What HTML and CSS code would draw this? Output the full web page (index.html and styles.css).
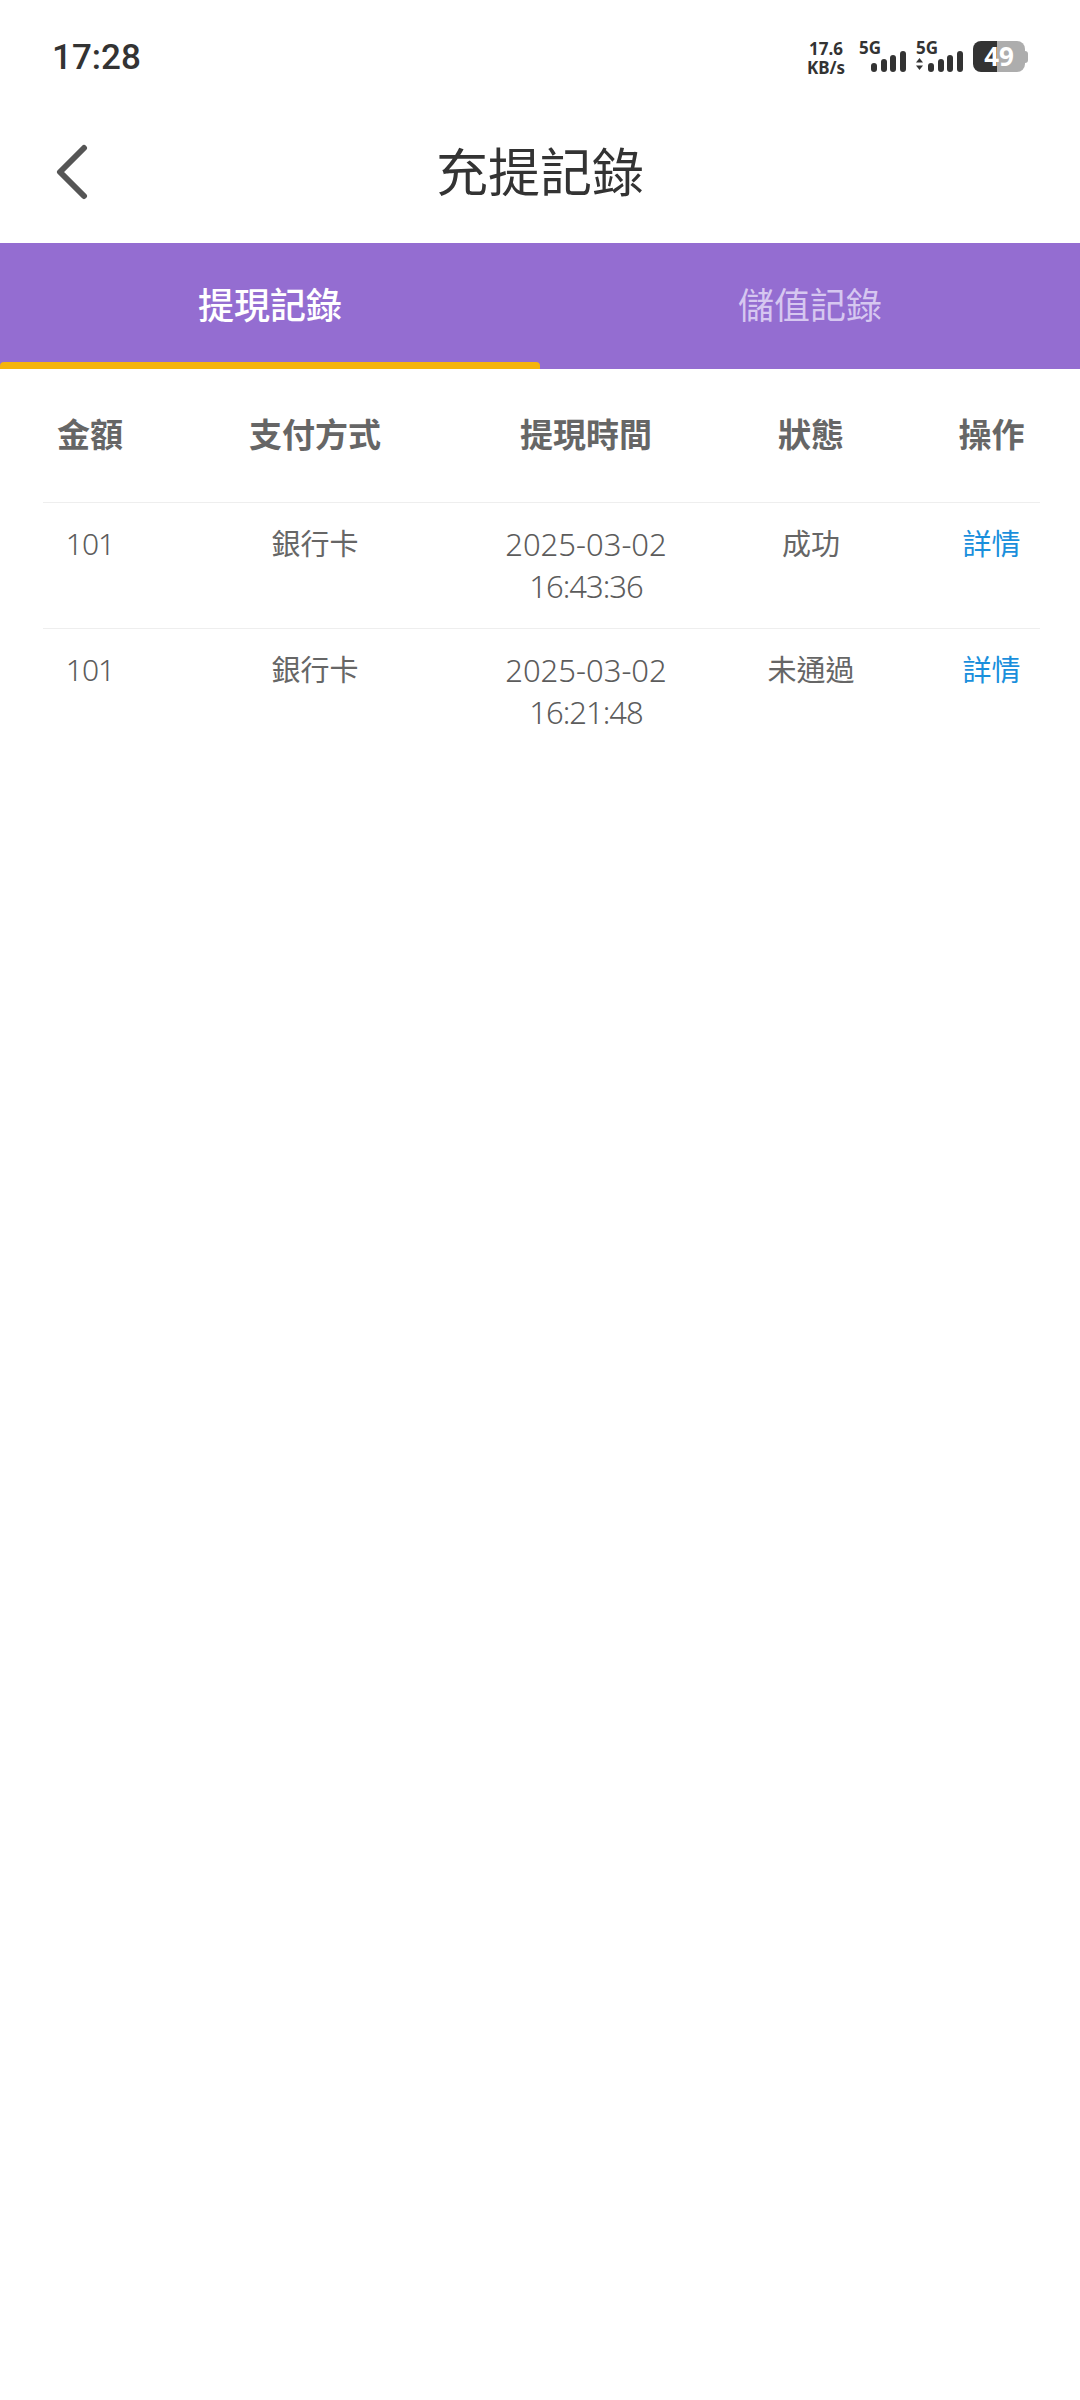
FILE: index.html
```html
<!DOCTYPE html>
<html lang="zh-Hant">
<head>
    <meta charset="UTF-8">
    <meta name="viewport" content="width=device-width, initial-scale=1.0">
    <title>充提記錄</title>
    <link rel="stylesheet" href="styles.css">
</head>
<body>

    <div class="status-bar">
        <span class="clock">17:28</span>
        <div class="status-icons">
            <div class="speed"><span>17.6</span><span>KB/s</span></div>
            <div class="sim">
                <span class="sim-label">5G</span>
                <svg class="sim-bars" width="35" height="21" viewBox="0 0 35 21" fill="#333">
                    <rect x="0" y="12" width="6" height="9" rx="3"/>
                    <rect x="10" y="8" width="6" height="13" rx="3"/>
                    <rect x="19" y="4" width="6" height="17" rx="3"/>
                    <rect x="29" y="0" width="6" height="21" rx="3"/>
                </svg>
            </div>
            <div class="sim">
                <span class="sim-label">5G</span>
                <svg class="sim-bars" width="47" height="21" viewBox="0 0 47 21" fill="#333">
                    <path d="M0 11.5 3.5 7 7 11.5Z"/>
                    <path d="M0 14.5 3.5 19 7 14.5Z"/>
                    <rect x="12" y="12" width="6" height="9" rx="3"/>
                    <rect x="22" y="8" width="6" height="13" rx="3"/>
                    <rect x="31" y="4" width="6" height="17" rx="3"/>
                    <rect x="41" y="0" width="6" height="21" rx="3"/>
                </svg>
            </div>
            <div class="battery">
                <span class="battery-level">49</span>
                <span class="battery-nub"></span>
            </div>
        </div>
    </div>

    <header class="nav">
        <svg class="back" width="34" height="56" viewBox="0 0 34 56" fill="none" stroke="#555" stroke-width="6" stroke-linecap="round" stroke-linejoin="round">
            <path d="M29 4 5 28l24 24"/>
        </svg>
        <h1 class="nav-title">充提記錄</h1>
    </header>

    <nav class="tabs">
        <a class="tab active">提現記錄</a>
        <a class="tab">儲值記錄</a>
    </nav>

    <table class="records">
        <colgroup>
            <col class="col-amount">
            <col class="col-method">
            <col class="col-time">
            <col class="col-state">
            <col class="col-action">
        </colgroup>
        <thead>
            <tr>
                <th>金額</th>
                <th>支付方式</th>
                <th>提現時間</th>
                <th>狀態</th>
                <th>操作</th>
            </tr>
        </thead>
        <tbody>
            <tr>
                <td class="amount">101</td>
                <td>銀行卡</td>
                <td class="time">2025-03-02<br><span class="clock-part">16:43:36</span></td>
                <td>成功</td>
                <td><a class="detail">詳情</a></td>
            </tr>
            <tr>
                <td class="amount">101</td>
                <td>銀行卡</td>
                <td class="time">2025-03-02<br><span class="clock-part">16:21:48</span></td>
                <td>未通過</td>
                <td><a class="detail">詳情</a></td>
            </tr>
        </tbody>
    </table>

</body>
</html>
```

FILE: styles.css
```css
* {
    box-sizing: border-box;
}
body {
    margin: 0;
    width: 1080px;
    height: 2400px;
    background: #fff;
    font-family: "Noto Sans", "Noto Sans CJK TC", sans-serif;
    color: #666;
}
.status-bar {
    height: 80px;
    padding: 36px 52px 0;
    display: flex;
    justify-content: space-between;
    align-items: flex-start;
    color: #333;
}
.clock {
    font-family: "Roboto", sans-serif;
    font-size: 35px;
    line-height: 44px;
    font-weight: 500;
}
.status-icons {
    display: flex;
    align-items: flex-start;
    margin-top: 3px;
}
.speed {
    width: 36px;
    display: flex;
    flex-direction: column;
    align-items: center;
    font-size: 17px;
    line-height: 19px;
    font-weight: 700;
    margin-right: 14px;
}
.sim {
    width: 48px;
    display: flex;
    flex-direction: column;
    margin-right: 9px;
    padding-top: 1px;
}
.sim-label {
    font-size: 17px;
    line-height: 16px;
    font-weight: 700;
    width: 24px;
    padding-left: 1px;
}
.sim-bars {
    align-self: flex-end;
    margin-top: -5px;
}
.battery {
    display: flex;
    align-items: center;
    margin-left: 1px;
    margin-top: 2px;
}
.battery-level {
    width: 52px;
    height: 31px;
    border-radius: 8px;
    background: linear-gradient(to right, #333 46%, #adadad 46%);
    color: #fff;
    font-size: 26px;
    line-height: 31px;
    font-weight: 700;
    text-align: center;
}
.battery-nub {
    width: 3px;
    height: 12px;
    border-radius: 0 3px 3px 0;
    background: #adadad;
}
.nav {
    height: 163px;
    padding: 20px 0 0 55px;
    position: relative;
    display: flex;
    align-items: center;
}
.nav-title {
    position: absolute;
    left: 0;
    right: 0;
    margin: 0;
    text-align: center;
    font-size: 52px;
    line-height: 70px;
    font-weight: 400;
    color: #333;
}
.tabs {
    height: 126px;
    display: flex;
    background: #946dd1;
}
.tab {
    flex: 1;
    position: relative;
    text-align: center;
    font-size: 36px;
    line-height: 126px;
    color: #d6c7f0;
}
.tab.active {
    color: #fff;
    font-weight: 500;
}
.tab.active::after {
    content: "";
    position: absolute;
    left: 0;
    right: 0;
    bottom: 0;
    height: 7px;
    border-radius: 4px 4px 0 0;
    background: #f5b40c;
}
.records {
    width: 997px;
    margin-left: 43px;
    border-collapse: collapse;
    table-layout: fixed;
}
.col-amount { width: 94px; }
.col-method { width: 356px; }
.col-time { width: 186px; }
.col-state { width: 264px; }
.col-action { width: 97px; }
.records th {
    height: 133px;
    padding: 0 0 5px;
    font-size: 33px;
    font-weight: 700;
    text-align: center;
    white-space: nowrap;
}
.records td {
    height: 126px;
    padding: 20px 0;
    border-top: 1px solid #eee;
    font-size: 29px;
    line-height: 42px;
    text-align: center;
    vertical-align: top;
    white-space: nowrap;
}
.records td.time {
    font-size: 31px;
    font-weight: 300;
    color: #5c5c5c;
}
.clock-part {
    letter-spacing: -1px;
}
.records td.amount {
    font-size: 30px;
    font-weight: 300;
    letter-spacing: -1px;
    color: #5c5c5c;
}
.detail {
    color: #1a8fdc;
}
```
